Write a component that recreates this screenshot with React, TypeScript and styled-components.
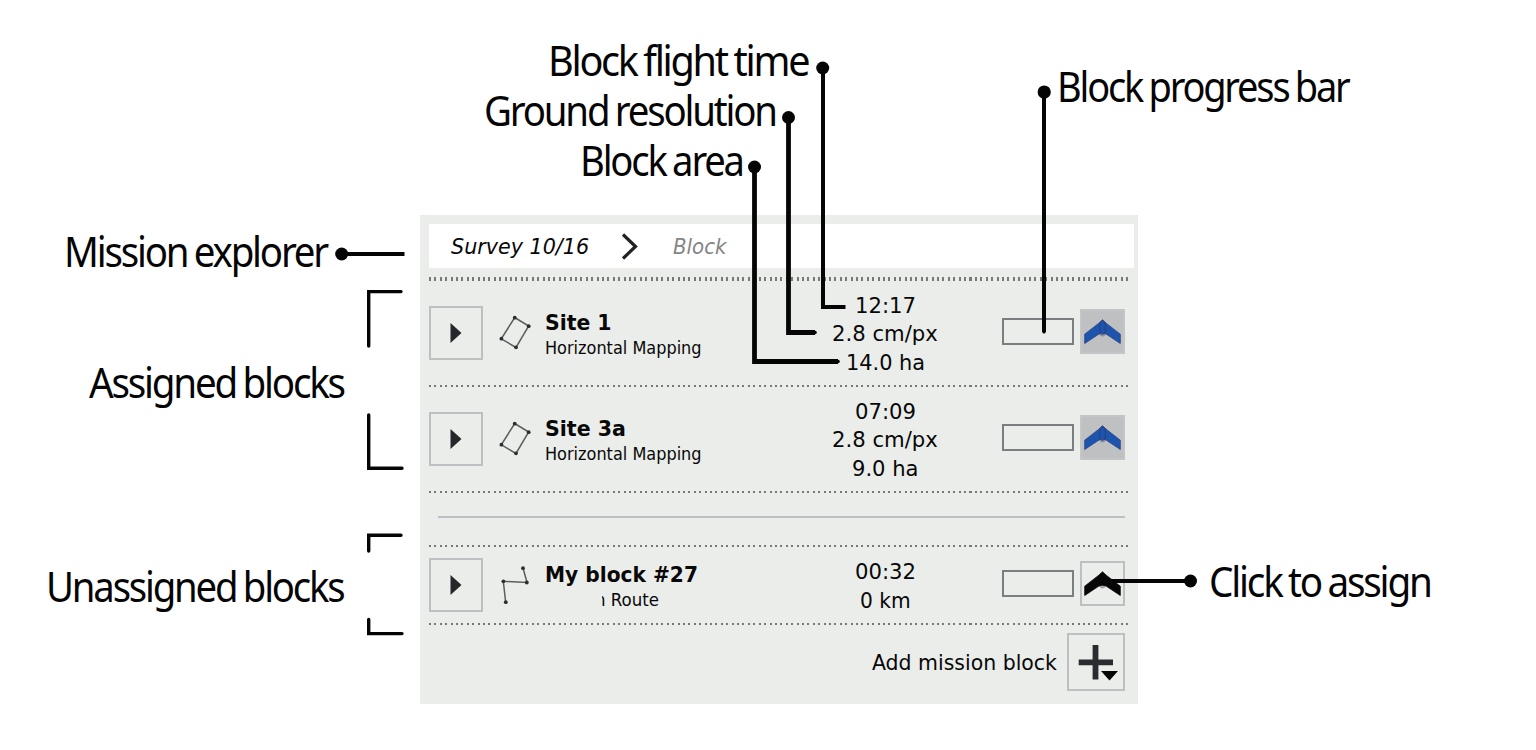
import React, { useLayoutEffect, useRef, useState } from 'react';
import styled, { createGlobalStyle, css } from 'styled-components';

const GlobalStyle = createGlobalStyle`
  * { box-sizing: border-box; }
  body { margin: 0; background: #fff; color: #050505; }
`;

const uiFont = css`font-family: 'DejaVu Sans Condensed', 'DejaVu Sans', sans-serif; font-stretch: condensed;`;

/* ---------- text that fills a given width ---------- */

const FitBox = styled.span<{ $width: number }>`
  display: block;
  width: ${p => p.$width}px;
  white-space: nowrap;
`;
const FitInner = styled.span`
  display: inline-block;
  transform-origin: 0 50%;
`;

function Fit({ width, children }: { width: number; children: React.ReactNode }) {
  const ref = useRef<HTMLSpanElement>(null);
  const [scale, setScale] = useState(1);
  useLayoutEffect(() => {
    if (ref.current) setScale(width / ref.current.offsetWidth);
  }, [width]);
  return (
    <FitBox $width={width}>
      <FitInner ref={ref} style={{ transform: `scaleX(${scale})` }}>{children}</FitInner>
    </FitBox>
  );
}

/* ---------- page ---------- */

const Page = styled.main`
  position: relative;
  width: 1536px;
  height: 750px;
  overflow: hidden;
  display: grid;
  grid-template: 215px 489px / 420px 718px 1fr;
  font-family: 'Noto Sans', sans-serif;
`;
const Note = styled.div<{ $top?: number; $left?: number }>`
  margin-top: ${p => p.$top ?? 0}px;
  margin-left: ${p => p.$left ?? 0}px;
  height: 50px;
  font-size: 42px;
  line-height: 50px;
  letter-spacing: -2.4px;
  word-spacing: -1.5px;
`;
const TopNotes = styled.section`
  grid-column: 1 / -1;
  display: flex;
  align-items: flex-start;
`;
const StackedNotes = styled.div`
  width: 1057px;
  padding-top: 35px;
`;
const SideNotes = styled.section`
  display: flex;
  flex-direction: column;
`;

const Leaders = styled.svg`
  position: absolute;
  inset: 0;
  pointer-events: none;
`;

/* ---------- panel ---------- */

const Panel = styled.section`
  ${uiFont}
  background: #ebedea;
  padding: 9px 4px 0 9px;
  display: flex;
  flex-direction: column;
  color: #080808;
`;
const Breadcrumb = styled.nav`
  height: 44px;
  margin-bottom: 9px;
  padding-left: 22px;
  background: #fff;
  display: flex;
  align-items: center;
  font-size: 22px;
  font-style: italic;
`;
const CrumbArrow = styled.svg`
  margin: 0 35px 0 32px;
`;
const Muted = styled.span`
  color: #858585;
`;
const Dots = styled.div<{ $thick?: boolean }>`
  width: 700px;
  height: ${p => (p.$thick ? 4 : 2)}px;
  background: repeating-linear-gradient(90deg, #777977 0 2px, transparent 2px 5.405px);
`;
const Row = styled.div<{ $compact?: boolean }>`
  height: ${p => (p.$compact ? 76 : 104)}px;
  width: 696px;
  display: flex;
  align-items: center;
`;
const PlayButton = styled.button`
  width: 54px;
  height: 54px;
  padding: 0;
  border: 2px solid #bdbfc0;
  background: transparent;
  display: grid;
  place-items: center;
`;
const BlockIcon = styled.svg`
  margin-left: 14px;
`;
const Names = styled.div`
  margin: 2px 0 0 12px;
  width: 230px;
`;
const Title = styled.div`
  font-size: 22px;
  font-weight: bold;
  line-height: 28px;
`;
const Kind = styled.div`
  font-size: 17px;
  line-height: 22px;
`;
const Clipped = styled.div`
  margin-left: 57px;
  overflow: hidden;
  & > span { margin-left: -7px; }
`;
const Stats = styled.div`
  width: 220px;
  margin-top: 3px;
  display: flex;
  flex-direction: column;
  align-items: center;
  font-size: 22px;
  line-height: 28.6px;
`;
const Progress = styled.div`
  margin: 0 0 3px 7px;
  width: 72px;
  height: 27px;
  border: 2px solid #7b7e80;
`;
const AssignButton = styled.button<{ $assigned?: boolean }>`
  margin: 0 0 3px auto;
  width: 45px;
  height: 45px;
  padding: 0;
  border: 2px solid ${p => (p.$assigned ? '#c3c5c7' : '#bdbfc0')};
  background: ${p => (p.$assigned ? '#bfc0c2' : 'transparent')};
  display: grid;
  place-items: center;
`;
const Separator = styled.div`
  height: 2px;
  width: 687px;
  margin: 23px 0 27px 9px;
  background: #bdc0c2;
`;
const Footer = styled.div`
  width: 696px;
  margin-top: 8px;
  display: flex;
  align-items: center;
  justify-content: flex-end;
  gap: 10px;
  font-size: 22px;
`;
const AddButton = styled.button`
  width: 58px;
  height: 58px;
  padding: 0;
  border: 2px solid #bdbfc0;
  background: transparent;
`;

/* ---------- icons ---------- */

const PlayIcon = () => (
  <svg width="12" height="22" viewBox="0 0 12 22"><path d="M0.5 1 L11.5 11 L0.5 21 Z" fill="#25272b" /></svg>
);

const AreaIcon = () => (
  <BlockIcon width="36" height="40" viewBox="0 0 36 40">
    <path d="M17.7 4.5 L31.7 13 L19 34.5 L4.3 25.8 Z" fill="none" stroke="#5b5d5f" strokeWidth="1.5" />
    <g fill="#2b2d2f"><circle cx="17.7" cy="4.7" r="1.9" /><circle cx="31.7" cy="13.2" r="1.9" /><circle cx="19" cy="34.3" r="1.9" /><circle cx="4.4" cy="25.7" r="1.9" /></g>
  </BlockIcon>
);

const RouteIcon = () => (
  <BlockIcon width="36" height="40" viewBox="0 0 36 40">
    <path d="M26 3 L30 17.5 L6.3 16.3 L8.7 37.5" fill="none" stroke="#5b5d5f" strokeWidth="1.5" />
    <g fill="#2b2d2f"><circle cx="26" cy="3.2" r="1.9" /><circle cx="29.8" cy="17.5" r="1.9" /><circle cx="6.4" cy="16.3" r="1.9" /><circle cx="8.8" cy="37.2" r="1.9" /></g>
  </BlockIcon>
);

const WingIcon = ({ active }: { active?: boolean }) => (
  <svg width="37" height="26" viewBox="0 0 37 26">
    <circle cx="18.5" cy="14.5" r="3" fill={active ? '#8e93a0' : '#a8a9a9'} />
    <path
      d="M18.5 0.8 L22.2 4.2 L36.3 15.2 V24.5 L22 15 L18.5 14.2 L15 15 L0.7 24.5 V15.2 L14.8 4.2 Z"
      fill={active ? '#1d55ae' : '#070707'}
      stroke={active ? '#2b427d' : '#070707'}
      strokeWidth="0.8"
    />
    {active && <path d="M15.8 4 V13.5 L18.5 15.5 L21.2 13.5 V4 L18.5 1.2 Z" fill="none" stroke="#2b3c80" strokeWidth="1" />}
  </svg>
);

const PlusIcon = () => (
  <svg width="54" height="54" viewBox="0 0 54 54">
    <path d="M26.5 10 V44.5 M9.7 27.3 H44" stroke="#2a2c30" strokeWidth="5.8" />
    <path d="M32 36 H49 L40.5 45.5 Z" fill="#050505" />
  </svg>
);

/* ---------- data ---------- */

type Stat = [text: string, width: number];
type Block = {
  title: string; titleWidth: number; kind: string; kindWidth: number;
  stats: Stat[]; assigned: boolean;
};

const assignedBlocks: Block[] = [
  { title: 'Site 1', titleWidth: 67, kind: 'Horizontal Mapping', kindWidth: 157, assigned: true,
    stats: [['12:17', 61], ['2.8 cm/px', 106], ['14.0 ha', 79]] },
  { title: 'Site 3a', titleWidth: 81, kind: 'Horizontal Mapping', kindWidth: 157, assigned: true,
    stats: [['07:09', 61], ['2.8 cm/px', 106], ['9.0 ha', 66]] },
];
const unassignedBlock: Block = {
  title: 'My block #27', titleWidth: 153, kind: 'n Route', kindWidth: 64, assigned: false,
  stats: [['00:32', 61], ['0 km', 51]],
};

function BlockRow({ block }: { block: Block }) {
  const kind = <Fit width={block.kindWidth}>{block.kind}</Fit>;
  return (
    <Row $compact={!block.assigned}>
      <PlayButton aria-label="Expand"><PlayIcon /></PlayButton>
      {block.assigned ? <AreaIcon /> : <RouteIcon />}
      <Names>
        <Title><Fit width={block.titleWidth}>{block.title}</Fit></Title>
        <Kind>{block.assigned ? kind : <Clipped>{kind}</Clipped>}</Kind>
      </Names>
      <Stats>
        {block.stats.map(([text, width]) => <Fit key={text} width={width}>{text}</Fit>)}
      </Stats>
      <Progress />
      <AssignButton $assigned={block.assigned} aria-label="Assign"><WingIcon active={block.assigned} /></AssignButton>
    </Row>
  );
}

export default function App() {
  return (
    <Page>
      <GlobalStyle />
      <TopNotes>
        <StackedNotes>
          <Note $left={548}><Fit width={260}>Block flight time</Fit></Note>
          <Note $left={484}><Fit width={292}>Ground resolution</Fit></Note>
          <Note $left={580}><Fit width={163}>Block area</Fit></Note>
        </StackedNotes>
        <Note $top={61}><Fit width={292}>Block progress bar</Fit></Note>
      </TopNotes>

      <SideNotes>
        <Note $top={11} $left={64}><Fit width={263}>Mission explorer</Fit></Note>
        <Note $top={81} $left={89}><Fit width={254.5}>Assigned blocks</Fit></Note>
        <Note $top={154} $left={46}><Fit width={297.5}>Unassigned blocks</Fit></Note>
      </SideNotes>

      <Panel>
        <Breadcrumb>
          <Fit width={138}>Survey 10/16</Fit>
          <CrumbArrow width="17" height="27" viewBox="0 0 17 27">
            <path d="M2 1.5 L14.5 13.5 L2 25.5" fill="none" stroke="#202226" strokeWidth="3.2" />
          </CrumbArrow>
          <Muted><Fit width={54}>Block</Fit></Muted>
        </Breadcrumb>
        <Dots $thick />
        {assignedBlocks.map(b => (
          <React.Fragment key={b.title}><BlockRow block={b} /><Dots /></React.Fragment>
        ))}
        <Separator />
        <Dots />
        <BlockRow block={unassignedBlock} />
        <Dots />
        <Footer>
          <Fit width={185}>Add mission block</Fit>
          <AddButton aria-label="Add mission block"><PlusIcon /></AddButton>
        </Footer>
      </Panel>

      <SideNotes>
        <Note $top={341} $left={71}><Fit width={222}>Click to assign</Fit></Note>
      </SideNotes>

      <Leaders width="1536" height="750" viewBox="0 0 1536 750">
        <g fill="none" stroke="#050505" strokeLinejoin="miter">
          <path d="M823 68 V307 H845.5" strokeWidth="4" />
          <path d="M788.5 117 V332.5 H815" strokeWidth="4.8" />
          <path d="M754.5 167 V361.5 H838" strokeWidth="4.8" />
          <path d="M1044 92 V332" strokeWidth="4" />
          <path d="M342 254 H404.5" strokeWidth="4" />
          <path d="M1106 581 H1190" strokeWidth="4" />
          <g strokeWidth="3.4" strokeLinecap="round">
            <path d="M368.7 346 V291.6 H401" />
            <path d="M368.7 415 V468.2 H402" />
            <path d="M368.7 551 V535.2 H401" />
            <path d="M368.7 619.5 V633.6 H402" />
          </g>
        </g>
        <g fill="#050505">
          <circle cx="822.7" cy="68" r="6.5" />
          <circle cx="788.5" cy="117.5" r="6.5" />
          <circle cx="754.5" cy="167" r="6.5" />
          <circle cx="1044.2" cy="92" r="6.6" />
          <circle cx="341.7" cy="254" r="6.5" />
          <circle cx="1190.5" cy="581" r="6.5" />
          <circle cx="815" cy="332.5" r="1.8" />
          <circle cx="838" cy="361.5" r="1.8" />
          <circle cx="1044" cy="332" r="1.6" />
        </g>
      </Leaders>
    </Page>
  );
}
